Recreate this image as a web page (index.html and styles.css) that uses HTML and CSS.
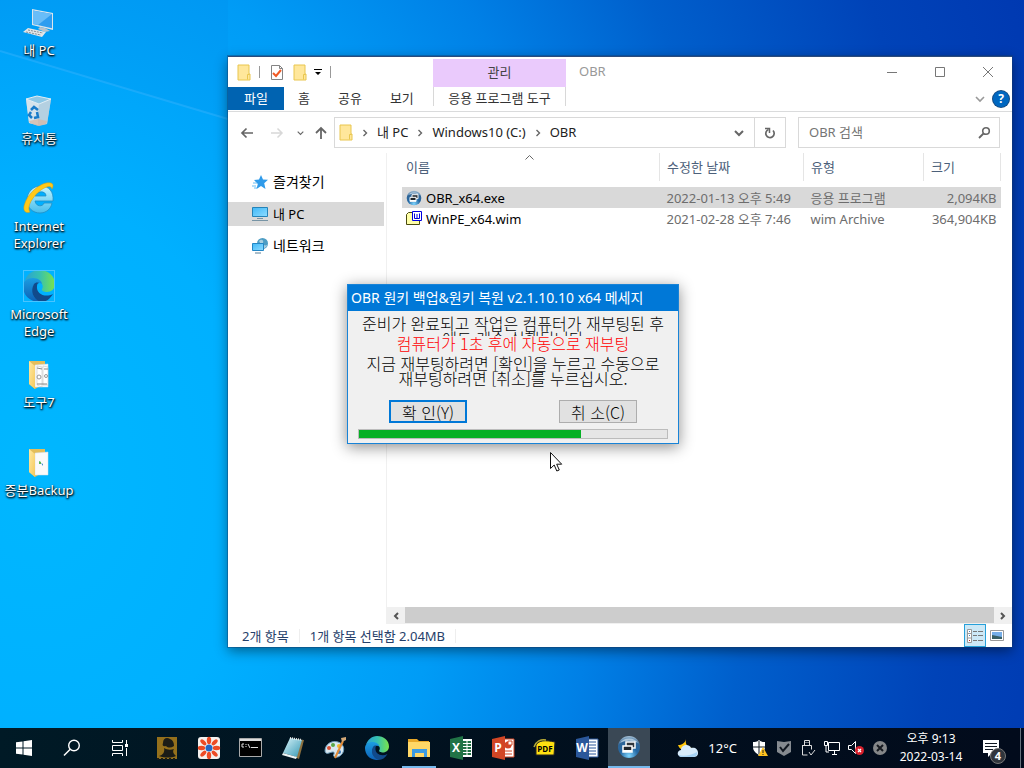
FILE: index.html
```html
<!DOCTYPE html>
<html lang="ko">
<head>
<meta charset="utf-8">
<title>OBR</title>
<link rel="stylesheet" href="styles.css">
</head>
<body>
<svg width="0" height="0" class="defs" aria-hidden="true">
  <defs>
    <linearGradient id="edgeA" x1="0" y1="0" x2="1" y2="0"><stop offset="0" stop-color="#2a9fd6"/><stop offset=".5" stop-color="#35c1b1"/><stop offset="1" stop-color="#7be34a"/></linearGradient>
    <linearGradient id="edgeB" x1="0" y1="0" x2="0" y2="1"><stop offset="0" stop-color="#1b9de2"/><stop offset="1" stop-color="#0d5fb5"/></linearGradient>
    <linearGradient id="scr" x1="0" y1="0" x2="1" y2="1"><stop offset="0" stop-color="#3fb8f8"/><stop offset="1" stop-color="#8fdcff"/></linearGradient>
    <linearGradient id="ieBlue" x1="0" y1="0" x2="0" y2="1"><stop offset="0" stop-color="#c4f5ff"/><stop offset="1" stop-color="#46bdec"/></linearGradient>
    <linearGradient id="fold" x1="0" y1="0" x2="1" y2="1"><stop offset="0" stop-color="#ffe9a2"/><stop offset="1" stop-color="#f5c95c"/></linearGradient>
    <radialGradient id="ball" cx=".5" cy=".9" r=".9"><stop offset="0" stop-color="#7fd6ff"/><stop offset=".45" stop-color="#2467a2"/><stop offset=".75" stop-color="#2f6597"/><stop offset="1" stop-color="#a9c3d8"/></radialGradient>
    <linearGradient id="note" x1="0" y1="0" x2="1" y2="1"><stop offset="0" stop-color="#d9f4fa"/><stop offset="1" stop-color="#3598b4"/></linearGradient>
    <symbol id="edge" viewBox="0 0 32 32">
      <path d="M1 13C3 5 9 0 16 0c9 0 16 6 16 14 0 5-4 8-8 8-3 0-6-1-5-3 2-3 0-7-5-8C8 8 3 9 1 13z" fill="url(#edgeA)"/>
      <path d="M0 16c0-5 5-8 10-8 5 0 9 3 9 6-2-2-6-1-8 2-3 6 1 12 8 16C8 33 0 26 0 16z" fill="url(#edgeB)"/>
      <path d="M11 14c-4 7-1 15 7 18 5 0 9-3 12-8-8 4-17 0-16-8 0-2 1-3 2-3-2-1-4 0-5 1z" fill="#114a8b"/>
    </symbol>
    <symbol id="folder-sm" viewBox="0 0 14 17"><path d="M1 1h11v9h1v6H1z" fill="#ffe79b" stroke="#e9c64f"/><path d="M10.500 15.500v-5h2" fill="none" stroke="#e9c64f"/></symbol>
    <symbol id="obr" viewBox="0 0 24 24"><circle cx="12" cy="12" r="11" fill="url(#ball)"/><path d="M3 8a10 8 0 0 1 18 0c-5-3-13-3-18 0z" fill="#d2e3ee" opacity=".7"/><path d="M9 7h9v6h-9z" fill="#30363c" stroke="#f8fafc" stroke-width="1.500"/><path d="M6 11h9v6H6z" fill="#20262c" stroke="#fff" stroke-width="1.500"/><path d="M6 15h9v2H6z" fill="#fff"/></symbol>
    <symbol id="chev" viewBox="0 0 8 8"><path d="M2.500 1l3 3-3 3" fill="none" stroke="#666" stroke-width="1.400"/></symbol>
    <symbol id="chev-down" viewBox="0 0 10 8"><path d="M1 2l4 4 4-4" fill="none" stroke="currentColor" stroke-width="1.600"/></symbol>
    <symbol id="open-folder" viewBox="0 0 24 30"><path d="M2 1h16v22l-10 6-6-5z" fill="#e3bd5b"/><path d="M8 5l13-1v23H8z" fill="#fafafa" stroke="#d5dce2" stroke-width=".5"/><path d="M2 1l6 5v23l-6-5z" fill="url(#fold)"/></symbol>
  </defs>
</svg>

<main class="desktop">
  <svg class="beams" viewBox="0 0 1024 728" preserveAspectRatio="none" aria-hidden="true">
    <path d="M0 51l228 68V0H0z" fill="#0078dc" opacity=".08"/>
    <path d="M0 51l228 68" stroke="#48b9ff" stroke-width="2" opacity=".35"/>
  </svg>

  <ul class="shortcuts">
    <li><a href="#"><svg width="32" height="32" viewBox="0 0 32 32"><path d="M9 3l21 4v17L9 19z" fill="#dce5eb"/><path d="M10 4.500l19 3.600v14.200L10 18z" fill="#2d9df0"/><path d="M10 4.500l19 3.600-14 11-5-1z" fill="#68bdf8"/><path d="M17 21l5 1 5 3-5 1-7-3z" fill="#b7c4ce"/><path d="M5 22l18 4-4 5L0 26z" fill="#e3e6e8"/><path d="M5 24l15 3M3 26l15 3" stroke="#858e95" stroke-dasharray="2 1"/></svg><span>내 PC</span></a></li>
    <li><a href="#"><svg width="32" height="32" viewBox="0 0 32 32"><path d="M3 5l25 0-4 25-8 2-10-3z" fill="#a3c4d9"/><path d="M3 5l13 5-1 21-9-2z" fill="#d4e3ec"/><path d="M16 10l12-5-4 25-9 1z" fill="#b4d0e1"/><path d="M3 5l11-3 14 3-12 5z" fill="#8ec8e6" stroke="#e2eef5"/><path d="M6 27l9-2 9 2-1 3-8 2-8-3z" fill="#d9b6a2" opacity=".7"/><path d="M8 16l3-3 4 3M14 18l1 5-4 1M9 24l-3-3 2-3" fill="none" stroke="#187bc9" stroke-width="2.500"/></svg><span>휴지통</span></a></li>
    <li><a href="#"><svg width="32" height="32" viewBox="0 0 32 32"><path d="M29 21h-8c-1 4-8 4-9-2h18C31 10 26 4 18 4 10 4 4 10 4 18c0 8 6 13 13 13 6 0 11-4 12-10zM12 14c1-5 11-6 11 0z" fill="url(#ieBlue)" stroke="#228ec4" stroke-width=".8"/><path d="M7 30c-5 2-8-2-5-9C6 10 19-1 28 1c3 1 2 4 1 6-1-4-5-3-11 1C10 14 3 25 7 30z" fill="#ffc918" stroke="#d49a10" stroke-width=".5"/></svg><span>Internet<br>Explorer</span></a></li>
    <li><a href="#"><svg class="framed" width="32" height="32"><use href="#edge"/></svg><span>Microsoft<br>Edge</span></a></li>
    <li><a href="#"><svg width="32" height="32" viewBox="-4 -2 32 32"><use href="#open-folder" width="24" height="30"/><path d="M10 6l5 1v20l-5-2zM16 6l5 1v18h-5z" fill="#fff" stroke="#bbb" stroke-width=".5"/><path d="M10 8l5 1M17 9h4M10 24h10" stroke="#888"/><circle cx="12" cy="17" r="2" fill="none" stroke="#999"/><circle cx="19" cy="16" r="1.500" fill="none" stroke="#999"/></svg><span>도구7</span></a></li>
    <li><a href="#"><svg width="32" height="32" viewBox="-4 -2 32 32"><use href="#open-folder" width="24" height="30"/><path d="M12 13l2 1v2h-2z" fill="#57b557"/><path d="M14 15l2 1v2z" fill="#3583cb"/></svg><span>증분Backup</span></a></li>
  </ul>

  <section class="window" aria-label="OBR">
    <header class="ribbon">
      <div class="quick">
        <svg width="14" height="17"><use href="#folder-sm"/></svg><i class="bar"></i>
        <svg class="check" width="14" height="17" viewBox="0 0 14 17"><path d="M1.500 1.500h8l3 3v11h-11z" fill="#fff" stroke="#848484"/><path d="M9.500 1.500v3h3" fill="none" stroke="#848484"/><path d="M3 9l3 3 5-6" fill="none" stroke="#f15a24" stroke-width="2"/></svg>
        <svg width="14" height="17"><use href="#folder-sm"/></svg>
        <svg width="8" height="8" viewBox="0 0 8 8"><path d="M0 1h8v1H0zM1 4h6L4 7z"/></svg><i class="bar"></i>
      </div>
      <div class="manage">관리</div>
      <div class="titlebar">
        <h1>OBR</h1>
        <button aria-label="최소화"><svg width="12" height="12"><path d="M1 6.500h10" stroke="#777"/></svg></button>
        <button aria-label="최대화"><svg width="12" height="12"><path d="M1.500 1.500h9v9h-9z" fill="none" stroke="#777"/></svg></button>
        <button aria-label="닫기"><svg width="12" height="12"><path d="M1 1l10 10M11 1L1 11" stroke="#777"/></svg></button>
      </div>
      <nav class="tabs"><a class="file" href="#">파일</a><a href="#">홈</a><a href="#">공유</a><a href="#">보기</a></nav>
      <a class="tooltab" href="#">응용 프로그램 도구</a>
      <div class="help">
        <button aria-label="리본 확장"><svg class="dim" width="10" height="8"><use href="#chev-down"/></svg></button>
        <button class="question" aria-label="도움말">?</button>
      </div>
    </header>

    <div class="location">
      <button aria-label="뒤로"><svg width="14" height="12" viewBox="0 0 14 12"><path d="M13 6H2M6.500 1.500L2 6l4.500 4.500" fill="none" stroke="#666" stroke-width="1.700"/></svg></button>
      <button aria-label="앞으로"><svg width="14" height="12" viewBox="0 0 14 12"><path d="M1 6h11M7.500 1.500L12 6l-4.500 4.500" fill="none" stroke="#d8d8d8" stroke-width="1.500"/></svg></button>
      <button class="recent" aria-label="최근 위치"><svg width="7" height="6"><use href="#chev-down"/></svg></button>
      <button class="up" aria-label="위로"><svg width="12" height="14" viewBox="0 0 12 14"><path d="M6 13V2M1 7l5-5 5 5" fill="none" stroke="#666" stroke-width="1.800"/></svg></button>
      <div class="address">
        <svg width="14" height="17"><use href="#folder-sm"/></svg>
        <svg width="8" height="8"><use href="#chev"/></svg><a href="#">내 PC</a>
        <svg width="8" height="8"><use href="#chev"/></svg><a href="#">Windows10 (C:)</a>
        <svg width="8" height="8"><use href="#chev"/></svg><a href="#">OBR</a>
        <button class="drop" aria-label="이전 위치"><svg width="10" height="8" viewBox="0 0 10 8"><path d="M1 2l4 4 4-4" fill="none" stroke="#666" stroke-width="2"/></svg></button>
        <button class="refresh" aria-label="새로 고침"><svg width="12" height="12" viewBox="0 0 12 12"><path d="M9 3.500A4.200 4.200 0 1 1 4.500 2.500" fill="none" stroke="#666" stroke-width="1.700"/><path d="M1 1.500h4.500V6" fill="none" stroke="#666" stroke-width="1.500"/></svg></button>
      </div>
      <label class="search"><input type="text" placeholder="OBR 검색" aria-label="OBR 검색"><svg width="13" height="13" viewBox="0 0 13 13"><circle cx="8" cy="5" r="3.300" fill="none" stroke="#666" stroke-width="1.600"/><path d="M5.500 7.500L1 12" stroke="#666" stroke-width="1.800"/></svg></label>
    </div>

    <div class="content">
      <nav class="tree">
        <a href="#"><svg width="16" height="16" viewBox="0 0 16 16"><path d="M9 1l2 4.500 5 .3-3.800 3.400L13.500 15 9 12l-4.500 3 1.300-5L2 6l5-.5z" fill="#2f9bea"/><path d="M1 9h4M0 12h4M2 14h3" stroke="#69bdf3"/></svg>즐겨찾기</a>
        <a class="current" href="#"><svg width="16" height="16" viewBox="0 0 16 16"><path d="M.5 1.500h15v9H.5z" fill="url(#scr)" stroke="#2583b8"/><path d="M5 12.500h6M0 14.500h16" stroke="#7794a5"/></svg>내 PC</a>
        <a href="#"><svg width="16" height="16" viewBox="0 0 16 16"><circle cx="10.500" cy="5.500" r="5.500" fill="#4d9dc4"/><path d="M7 3c3-3 5 0 4 2s3 3 4 2-1 4-4 3" fill="#a9cfdf"/><path d="M.5 5.500h11v7H.5z" fill="url(#scr)" stroke="#2486c4"/><path d="M3 15h6" stroke="#567e98"/></svg>네트워크</a>
      </nav>
      <div class="files">
        <svg class="sort" width="9" height="5"><path d="M.5 4.500l4-4 4 4" fill="none" stroke="#666"/></svg>
        <table>
          <colgroup><col><col class="c-date"><col class="c-type"><col class="c-size"></colgroup>
          <thead><tr><th>이름</th><th>수정한 날짜</th><th>유형</th><th>크기</th></tr></thead>
          <tbody>
            <tr class="selected"><td><svg width="16" height="16"><use href="#obr"/></svg>OBR_x64.exe</td><td>2022-01-13 오후 5:49</td><td>응용 프로그램</td><td>2,094KB</td></tr>
            <tr><td><svg width="16" height="16" viewBox="0 0 16 16"><path d="M.5 3.500l2-2h4v2h7v10H.5z" fill="#ffffa8" stroke="#4a4a10"/><path d="M6.500.5h9v9h-9z" fill="#fff" stroke="#0000e0"/><path d="M8.500 2.500v5h5v-5M11 3v4" fill="none" stroke="#0000e0"/></svg>WinPE_x64.wim</td><td>2021-02-28 오후 7:46</td><td>wim Archive</td><td>364,904KB</td></tr>
          </tbody>
        </table>
        <div class="scroll"><button aria-label="왼쪽"><svg width="8" height="8" viewBox="0 0 8 8"><path d="M6 1L3 4l3 3" fill="none" stroke="#555" stroke-width="2"/></svg></button><div class="thumb"></div><button aria-label="오른쪽"><svg width="8" height="8" viewBox="0 0 8 8"><path d="M2 1l3 3-3 3" fill="none" stroke="#555" stroke-width="2"/></svg></button></div>
      </div>
    </div>

    <footer class="status">
      <span>2개 항목</span><span>1개 항목 선택함 2.04MB</span>
      <button class="view on" aria-label="자세히"><svg width="18" height="14" viewBox="0 0 18 14"><path d="M1.500.5h4v13h-4z" fill="#fff" stroke="#999"/><path d="M1 4.500h5M1 9h5" stroke="#999"/><path d="M7 2.500h4m1 0h5M7 6.500h4m1 0h5M7 11.500h4m1 0h5" stroke="#777"/><path d="M3 2h1v1H3z" fill="#4080c0"/><path d="M3 6h1v1H3z" fill="#4080c0"/><path d="M3 11h1v1H3z" fill="#c02020"/></svg></button>
      <button class="view" aria-label="큰 아이콘"><svg width="14" height="11" viewBox="0 0 14 11"><path d="M.5.5h13v10H.5z" fill="#fff" stroke="#999"/><path d="M2 2h10v7H2z" fill="#76aee8"/><path d="M2 5l5 1 5 1v2H2z" fill="#385f64"/></svg></button>
    </footer>
  </section>

  <section class="dialog" role="dialog" aria-labelledby="dlg">
    <h2 id="dlg">OBR 원키 백업&amp;원키 복원 v2.1.10.10 x64 메세지</h2>
    <div class="message">
      <p class="clipped">준비가 완료되고 작업은 컴퓨터가 재부팅된 후<br>에도 계속 실행됩니다</p>
      <p class="countdown">컴퓨터가 1초 후에 자동으로 재부팅</p>
      <p>지금 재부팅하려면 [확인]을 누르고 수동으로<br>재부팅하려면 [취소]를 누르십시오.</p>
    </div>
    <div class="choices"><button class="primary">확 인(Y)</button><button>취 소(C)</button></div>
    <div class="progress" role="progressbar" aria-valuenow="72"><div style="width:72%"></div></div>
  </section>

  <svg class="pointer" width="13" height="21" viewBox="0 0 13 21"><path d="M.5.500v16l3.700-3.500 2.600 6 2.500-1-2.600-5.800h5z" fill="#fff" stroke="#111"/></svg>
</main>

<footer class="taskbar">
  <button class="wide" aria-label="시작"><svg width="16" height="16" viewBox="0 0 16 16"><path d="M0 2.300L6.500 1.400v6.100H0zM7.500 1.200L16 0v7.500H7.500zM0 8.500h6.500v6.100L0 13.700zM7.500 8.500H16V16l-8.500-1.200z" fill="#fff"/></svg></button>
  <button class="wide" aria-label="검색"><svg width="18" height="18" viewBox="0 0 18 18"><circle cx="11" cy="6.500" r="5.300" fill="none" stroke="#fff" stroke-width="1.400"/><path d="M7.200 10.300L1 16.500" stroke="#fff" stroke-width="1.500"/></svg></button>
  <button class="wide" aria-label="작업 보기"><svg width="18" height="16" viewBox="0 0 18 16"><path d="M1.500 0v2.500h10V0M1.500 16v-2.500h10V16M1.500 5.500h10v5h-10zM15.500 0v4M15.500 8v8" fill="none" stroke="#fff"/><path d="M14 4h3v3h-3z" fill="#fff"/></svg></button>
  <button aria-label="BackupTool"><svg width="22" height="24" viewBox="0 0 22 24"><path d="M1 1h20v22H1z" fill="#94701c"/><path d="M7 7c0-5 4-6 7-4 3 1 4 4 4 7-3 2-6 2-8 0-3 1-4-1-3-3z" fill="#1b1c17"/><path d="M8 12c3 2 7 2 10 1-2 3 0 5 2 7-5 2-11 2-17 0 4-1 6-4 5-8z" fill="#1b1c17"/><path d="M1 23h20" stroke="#1b1c17" stroke-width="2" stroke-dasharray="2 2"/></svg></button>
  <button aria-label="이미지 뷰어"><svg width="24" height="24" viewBox="-12 -12 24 24"><rect x="-11" y="-11" width="22" height="22" rx="3" fill="#f5f1ef"/><g fill="#ed4a25"><ellipse cy="-7.500" rx="2.200" ry="3.700"/><ellipse cy="7.500" rx="2.200" ry="3.700"/><ellipse cx="-7.500" rx="3.700" ry="2.200"/><ellipse cx="7.500" rx="3.700" ry="2.200"/><g transform="rotate(45)"><ellipse cy="-8" rx="2" ry="3.700"/><ellipse cy="8" rx="2" ry="3.700"/><ellipse cx="-8" rx="3.700" ry="2"/><ellipse cx="8" rx="3.700" ry="2"/></g></g><circle r="3.500" fill="#2467c4"/></svg></button>
  <button aria-label="명령 프롬프트"><svg width="24" height="20" viewBox="0 0 24 20"><path d="M.5.5h22v18H.5z" fill="#000" stroke="#aaa"/><path d="M1 1h21v2H1z" fill="#ddd"/><path d="M5 6H3v3h2M7 6v1m0 1v1M9 6l2 4M12 9.500h7" fill="none" stroke="#ddd"/></svg></button>
  <button aria-label="메모장"><svg width="24" height="24" viewBox="0 0 24 24"><path d="M9 3l14 1-5 19-4-2z" fill="#8d713f"/><path d="M9 2l12 2-5 17-14-4z" fill="url(#note)"/><path d="M9 2l12 2" stroke="#eee" stroke-width="2" stroke-dasharray="1 1"/><path d="M2 17l14 4-1 2L1 19z" fill="#edf3f3"/></svg></button>
  <button aria-label="그림판"><svg width="24" height="24" viewBox="0 0 24 24"><path d="M2 15C2 8 9 4 15 6c7 2 7 10 3 13-4 4-9 2-7-1 1-3-2-2-5-1-2 1-4 0-4-2z" fill="#d9e8f1" stroke="#6a99b8"/><circle cx="6" cy="12" r="2" fill="#d95136"/><circle cx="10" cy="9" r="2" fill="#58a847"/><circle cx="16" cy="10" r="2" fill="#f1b72e"/><circle cx="16" cy="16" r="2" fill="#3678bd"/><path d="M12 22l8-17" stroke="#e28b36" stroke-width="2"/><path d="M19 6l-1-4 5-1 0 3z" fill="#d5a977"/></svg></button>
  <button aria-label="Microsoft Edge"><svg width="24" height="24"><use href="#edge"/></svg></button>
  <button class="open" aria-label="파일 탐색기"><svg width="24" height="20" viewBox="0 0 24 20"><path d="M1 1h9l2 2h10v16H1z" fill="#e9a928"/><path d="M1 4h22v15H1z" fill="#ffd867"/><path d="M5 11h15v8h-3v-4H8v4H5z" fill="#3b9be2"/></svg></button>
  <button aria-label="Excel"><svg width="24" height="24" viewBox="0 0 24 24"><path d="M12 3h11v18H12z" fill="#fff"/><path d="M14 6h8M14 9h8M14 12h8M14 15h8M14 18h8" stroke="#217346" stroke-width="2"/><path d="M18 4v16" stroke="#fff"/><path d="M1 3l13-3v24L1 21z" fill="#217346"/><text x="7" y="16" class="glyph">X</text></svg></button>
  <button aria-label="PowerPoint"><svg width="24" height="24" viewBox="0 0 24 24"><path d="M12 3h11v18H12z" fill="#fff" stroke="#d24625"/><circle cx="17" cy="9" r="3.500" fill="#d24625"/><path d="M17 9V5h4v4z" fill="#fff" stroke="#d24625"/><path d="M14 15h7M14 18h7" stroke="#d24625"/><path d="M1 3l13-3v24L1 21z" fill="#d24625"/><text x="7" y="16" class="glyph">P</text></svg></button>
  <button aria-label="PDF"><svg width="24" height="20" viewBox="0 0 24 20"><path d="M3 7c3-5 9-5 19-3l-1 13H3z" fill="#ffe011" stroke="#222"/><path d="M1 9c2-6 7-8 12-7" fill="none" stroke="#b8ab35" stroke-width="1.500"/><text x="12" y="14" class="glyph pdf">PDF</text></svg></button>
  <button aria-label="Word"><svg width="24" height="24" viewBox="0 0 24 24"><path d="M12 3h11v18H12z" fill="#fff" stroke="#2b579a"/><path d="M14 6h7M14 9h7M14 12h7M14 15h7M14 18h7" stroke="#2b579a"/><path d="M1 3l13-3v24L1 21z" fill="#2b579a"/><text x="7" y="16" class="glyph">W</text></svg></button>
  <button class="active" aria-label="OBR"><svg width="24" height="24"><use href="#obr"/></svg></button>

  <div class="tray">
    <button class="weather"><svg width="24" height="22" viewBox="0 0 24 22"><path d="M10 2c-1 5 1 8 6 9-4 5-12 3-14-3 4 0 7-2 8-6z" fill="#ffc60c"/><path d="M6 20c-5 0-6-6-1-7 0-5 8-7 10-2 4-1 7 1 7 5 0 3-2 4-5 4z" fill="#d7ebfb"/><path d="M3 18c4 2 13 0 18-3 1 4-2 5-5 5H6c-2 0-3-1-3-2z" fill="#a6d3f5"/></svg><span>12°C</span></button>
    <div class="icons">
      <svg width="16" height="16" viewBox="0 0 16 16"><path d="M7 0c2 2 4 2 6 2v5c0 4-3 6-6 8-3-2-6-4-6-8V2c2 0 4 0 6-2z" fill="#fff"/><path d="M7 1v13M1 7h12" stroke="#111a22"/><path d="M11 7l5 9H6z" fill="#ffc21f"/><path d="M11 10v3m0 1v1" stroke="#222"/></svg>
      <svg width="16" height="16" viewBox="0 0 16 16"><path d="M1 1l7 1 7-1v11l-7 4-7-4z" fill="#858a90"/><path d="M4 7l3 4 6-7" fill="none" stroke="#111720" stroke-width="2"/></svg>
      <svg width="16" height="16" viewBox="0 0 16 16"><path d="M4.500 5V.5h5V5M2.500 5.500h9v4M2.500 5v10h5M6 2v1m2-1v1M9 12l2 3 4-5" fill="none" stroke="#ddd"/></svg>
      <svg width="16" height="16" viewBox="0 0 16 16"><path d="M4.500 2.500h11v8h-11zM8 14.500h5M10.500 11v3M.5 1.500h3v4h-3zM2 6v6h3" fill="none" stroke="#fff"/></svg>
      <svg width="16" height="16" viewBox="0 0 16 16"><path d="M.5 5.500h3l4-4v12l-4-4h-3z" fill="none" stroke="#fff"/><circle cx="11.500" cy="10.500" r="4.500" fill="#d9202c"/><path d="M10 9l3 3m0-3l-3 3" stroke="#fff" stroke-width="1.300"/></svg>
      <svg width="16" height="16" viewBox="0 0 16 16"><circle cx="8" cy="8" r="7" fill="#858789"/><path d="M5 5l6 6m0-6l-6 6" stroke="#15191f" stroke-width="2"/></svg>
    </div>
    <time class="clock">오후 9:13<br>2022-03-14</time>
    <button class="notice" aria-label="알림 4개"><svg width="18" height="18" viewBox="0 0 18 18"><path d="M1 1h16v13h-7l-4 4v-4H1z" fill="#fff"/><path d="M3 4.500h12M3 7.500h12M3 10.500h8" stroke="#111923"/></svg><b>4</b></button>
  </div>
</footer>
</body>
</html>
```
FILE: styles.css
```css
* { box-sizing: border-box; }
body {
  margin: 0;
  height: 100vh;
  display: flex;
  flex-direction: column;
  overflow: hidden;
  font: 13px/18px "Noto Sans", "Noto Sans CJK KR", sans-serif;
  color: #222;
}
button { border: 0; padding: 0; background: none; font: inherit; color: inherit; display: flex; align-items: center; justify-content: center; }
a { color: inherit; text-decoration: none; }
svg { flex: none; display: block; }
.defs { position: absolute; }

.desktop {
  position: relative;
  flex: 1;
  min-height: 0;
  background: radial-gradient(ellipse 1080px 1400px at 40px 480px, #00b7ff 0, #00b0ff 20%, #009cf6 38%, #0080e6 52%, #005fcc 66%, #0043b8 84%, #0037b0 100%);
}
.beams { position: absolute; inset: 0; width: 100%; height: 100%; }

.shortcuts {
  position: relative;
  list-style: none;
  margin: 0;
  padding: 6px 0 0;
  width: 78px;
  display: grid;
  grid-auto-rows: 88px;
}
.shortcuts a {
  display: flex;
  flex-direction: column;
  align-items: center;
  gap: 4px;
  text-align: center;
  line-height: 17px;
  color: #fff;
  text-shadow: 1px 1px 2px #000, 0 1px 2px #000;
  white-space: nowrap;
}
.framed { outline: 1px solid #49c4ff; outline-offset: -1px; }

.window {
  position: absolute;
  left: 228px;
  right: 12px;
  top: 56px;
  bottom: 81px;
  display: flex;
  flex-direction: column;
  background: #fff;
  border-top: 1px solid #2b4b7c;
  box-shadow: 0 0 0 1px rgba(20, 60, 110, .4), 0 4px 12px rgba(0, 0, 0, .45);
}
.ribbon {
  display: grid;
  grid-template-columns: 205px 133px 1fr;
  grid-template-rows: 30px 24px;
  border-bottom: 1px solid #dadbdc;
}
.quick { display: flex; align-items: center; padding-left: 9px; gap: 8px; }
.quick .check { margin-left: 2px; }
.quick .bar + .check + svg { margin-left: 1px; margin-right: -1px; }
.bar { width: 1px; height: 12px; background: #999; }
.manage { margin-top: 2px; padding-bottom: 2px; background: #eacafc; display: flex; align-items: center; justify-content: center; color: #444; }
.titlebar { display: flex; align-items: center; padding-left: 13px; }
.titlebar h1 { flex: 1; margin: 0; padding-bottom: 2px; font-size: 13px; font-weight: 400; line-height: 18px; color: #999; }
.titlebar button { width: 48px; height: 30px; }
.tabs { display: flex; line-height: 23px; color: #333; height: 23px; }
.tabs a { padding: 0 14px; }
.tabs .file { width: 56px; padding: 0; text-align: center; background: #0063b1; color: #fff; }
.tooltab { text-align: center; line-height: 22px; height: 19px; border: solid #d8d8d8; border-width: 0 1px; color: #333; }
.help { display: flex; align-items: center; justify-content: flex-end; gap: 8px; padding-right: 3px; }
.dim { color: #999; }
.question { width: 16px; height: 16px; border-radius: 50%; background: #0067c0; color: #fff; font-weight: 700; font-size: 12px; box-shadow: 0 0 0 1px #154a80; line-height: 16px; }

.location { display: flex; align-items: center; height: 41px; padding: 0 12px; color: #666; }
.location > button { width: 30px; height: 30px; margin-left: -8px; margin-right: 8px; }
.location > .recent { width: 16px; margin-left: -8px; }
.location > .up { width: 26px; margin-left: -8px; margin-right: 0; }
.address {
  flex: 1;
  display: flex;
  align-items: center;
  height: 31px;
  gap: 8px;
  padding-left: 4px;
  border: 1px solid #d9d9d9;
  color: #222;
}
.address a, .search input { padding-bottom: 2px; }
.address button { height: 29px; width: 31px; color: #666; }
.address .drop { margin-left: auto; }
.address .refresh { border-left: 1px solid #d9d9d9; margin-left: -8px; }
.search { display: flex; align-items: center; width: 202px; height: 31px; margin-left: 12px; padding: 0 8px 0 10px; border: 1px solid #d9d9d9; }
.search input { flex: 1; min-width: 0; border: 0; padding: 0 0 2px; outline: 0; font: inherit; background: none; }
.search input::placeholder { color: #757575; }

.content { flex: 1; min-height: 0; display: flex; }
.tree { width: 159px; padding: 17px 2px 0 0; border-right: 1px solid #f0f0f0; display: flex; flex-direction: column; gap: 8px; font-size: 14px; }
.tree a { display: flex; align-items: center; gap: 5px; height: 24px; padding-left: 24px; color: #000; }
.tree .current { background: #d9d9d9; font-size: 13px; }
.files { position: relative; flex: 1; min-width: 0; display: flex; flex-direction: column; }
.sort { position: absolute; left: 138px; top: 2px; }
table { table-layout: fixed; border-collapse: collapse; width: calc(100% - 26px); margin-left: 15px; color: #6d6d6d; }
.c-date { width: 144px; }
.c-type { width: 120px; }
.c-size { width: 77px; }
th { height: 28px; padding: 0 0 0 7px; text-align: left; font-weight: 400; color: #4c607a; border-right: 1px solid #e5e5e5; }
th:first-child { padding-left: 4px; }
td { height: 21px; padding: 0 0 0 7px; white-space: nowrap; }
td:first-child { display: flex; align-items: center; gap: 4px; padding-left: 4px; color: #000; }
td:last-child { text-align: right; padding-right: 4px; }
tbody::before { content: ""; display: block; height: 6px; }
.selected { background: #d9d9d9; }
.scroll { display: flex; height: 17px; margin-top: auto; background: #f0f0f0; }
.scroll button { width: 18px; }
.thumb { flex: 1; background: #cdcdcd; margin-bottom: 1px; }

.status { display: flex; align-items: center; height: 23px; padding: 0 4px 0 14px; color: #26406a; }
.status span { padding-right: 10px; margin-right: 10px; border-right: 1px solid #eee; line-height: 14px; }
.view { width: 22px; height: 23px; }
.view.on { margin-left: auto; background: #cce8f6; border: 1px solid #26a0da; }

.dialog {
  position: absolute;
  left: 347px;
  top: 284px;
  width: 332px;
  background: #f0f0f0;
  border: 1px solid #1883d7;
  box-shadow: 0 3px 14px rgba(0, 0, 0, .45);
  padding-bottom: 4px;
}
.dialog h2 { margin: 0; padding-left: 3px; background: #0078d7; color: #fff; font-size: 14px; font-weight: 400; line-height: 26px; height: 26px; white-space: nowrap; }
.message { padding-top: 5px; text-align: center; font: 300 16px/15px "Noto Sans CJK KR", sans-serif; color: #000; white-space: nowrap; }
.message p { margin: 0; }
.message .clipped { height: 20px; overflow: hidden; }
.message .countdown { height: 20px; color: #f00; }
.choices { display: flex; justify-content: space-between; padding: 14px 41px 6px; }
.choices button { width: 78px; height: 23px; background: #e1e1e1; border: 1px solid #adadad; font: 300 16px/18px "Noto Sans CJK KR", sans-serif; color: #000; }
.choices .primary { border: 2px solid #0078d7; }
.progress { margin: 0 10px; height: 10px; border: 1px solid #bcbcbc; background: #e6e6e6; }
.progress div { height: 100%; background: #06b025; }
.pointer { position: absolute; left: 550px; top: 452px; }

.taskbar { display: flex; height: 40px; background: linear-gradient(90deg, #001a26, #01101e 50%, #020b1c); color: #fff; }
.taskbar > button { width: 42px; }
.taskbar > .wide { width: 48px; }
.taskbar > .wide + button:not(.wide) { margin-left: 2px; }
.open { background: linear-gradient(#76b9ed, #76b9ed) center bottom / 34px 2px no-repeat; }
.active { background: #3a4855; border-bottom: 2px solid #76b9ed; }
.glyph { font: 700 12px "Open Sans", sans-serif; fill: #fff; text-anchor: middle; }
.pdf { font-size: 8px; fill: #000; }
.tray { margin-left: auto; display: flex; align-items: center; }
.weather { gap: 8px; margin-right: 15px; }
.icons { display: flex; gap: 8px; }
.clock { width: 86px; text-align: center; font-size: 12px; line-height: 18px; }
.notice { position: relative; width: 47px; height: 40px; border-right: 1px solid #66717c; margin-right: 3px; padding-right: 12px; }
.notice b { position: absolute; left: 16px; top: 20px; width: 16px; height: 16px; border-radius: 50%; background: #30353c; border: 1px solid #777; font-size: 11px; line-height: 14px; }
```
